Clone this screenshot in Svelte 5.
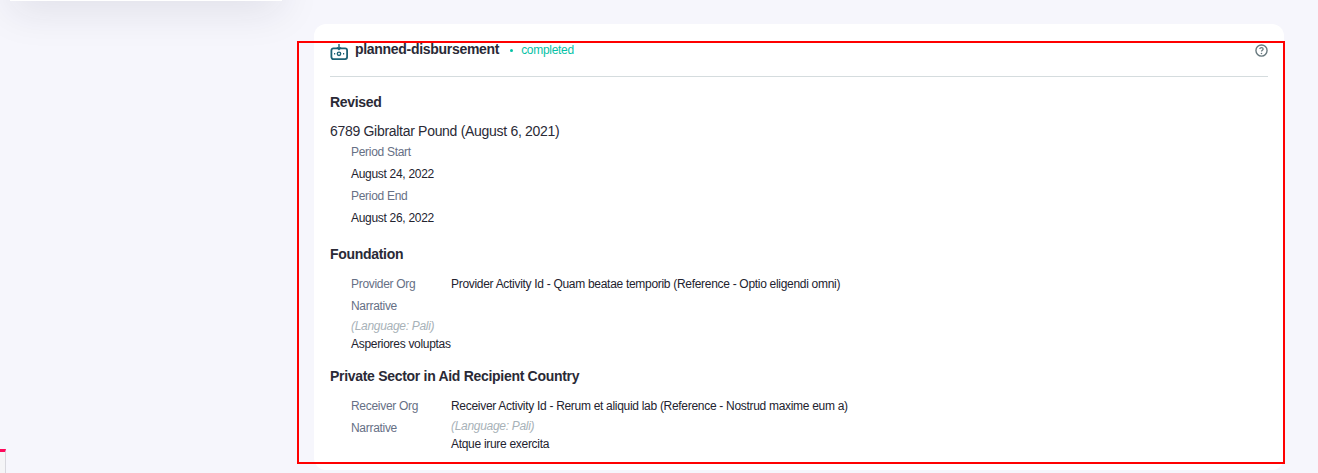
<script lang="ts">
  const providerRef = "Provider Activity Id - Quam beatae temporib (Reference - Optio eligendi omni)";
  const receiverRef = "Receiver Activity Id - Rerum et aliquid lab (Reference - Nostrud maxime eum a)";
</script>

<div class="page">
  <aside class="side">
    <div class="side-card"></div>
    <div class="side-mark"></div>
  </aside>

  <main class="card">
    <header class="head">
      <svg class="icon" viewBox="0 0 18 16" width="18" height="16" fill="none" stroke="#1d6275" aria-hidden="true">
        <rect x="1.4" y="4.4" width="15.7" height="10.7" rx="2" stroke-width="1.8" />
        <path d="M9 0V5.2M7 3.4L9 5.4l2-2" stroke-width="1.4" fill="none" />
        <circle cx="9" cy="9.8" r="1.7" stroke-width="1.4" />
        <path d="M4 9.8h1.2M13 9.8h1.2" stroke-width="1.4" />
      </svg>
      <h2>planned-disbursement</h2>
      <span class="dot"></span>
      <span class="status">completed</span>
      <svg class="help" viewBox="0 0 14 14" width="13" height="13" fill="none" aria-hidden="true">
        <circle cx="7" cy="7" r="6" stroke="#68797e" stroke-width="1.5" />
        <path d="M5.2 5.5c0-1 .8-1.6 1.8-1.6s1.8.6 1.8 1.5c0 1.3-1.8 1.3-1.8 2.6" stroke="#68797e" stroke-width="1.3" />
        <circle cx="7" cy="10.2" r=".85" fill="#68797e" />
      </svg>
    </header>

    <section class="revised">
      <h3>Revised</h3>
      <p class="amount">6789 Gibraltar Pound (August 6, 2021)</p>
      <div class="stack">
        <div class="label">Period Start</div>
        <div class="value">August 24, 2022</div>
        <div class="label">Period End</div>
        <div class="value">August 26, 2022</div>
      </div>
    </section>

    <section class="foundation">
      <h3>Foundation</h3>
      <div class="org">
        <div class="row">
          <div class="label key">Provider Org</div>
          <div class="value">{providerRef}</div>
        </div>
        <div class="label">Narrative</div>
        <div class="lang">(Language: Pali)</div>
        <div class="value tight">Asperiores voluptas</div>
      </div>
    </section>

    <section class="private">
      <h3>Private Sector in Aid Recipient Country</h3>
      <div class="org">
        <div class="row">
          <div class="label key">Receiver Org</div>
          <div class="value">{receiverRef}</div>
        </div>
        <div class="row">
          <div class="label key">Narrative</div>
          <div>
            <div class="lang">(Language: Pali)</div>
            <div class="value tight">Atque irure exercita</div>
          </div>
        </div>
      </div>
    </section>
  </main>

  <div class="highlight"></div>
</div>

<style>
  :global(body) {
    margin: 0;
    background: #f6f6fc;
  }

  .page {
    position: relative;
    display: flex;
    height: 473px;
    overflow: hidden;
    font-family: "Liberation Sans", Arial, sans-serif;
    letter-spacing: -0.3px;
    color: #1f2937;
    background: #f6f6fc;
  }

  .side {
    flex: 0 0 314px;
    display: flex;
    flex-direction: column;
    justify-content: space-between;
  }

  .side-card {
    width: 272px;
    height: 41px;
    margin: -40px 0 0 10px;
    background: #fff;
    box-shadow: 0 10px 40px rgba(30, 30, 60, 0.1);
  }

  .side-mark {
    width: 6px;
    height: 24px;
    box-sizing: border-box;
    border-top: 3px solid #ff0a5c;
    border-right: 1px solid #d8d8de;
    background: #f5f5f7;
  }

  .card {
    flex: 0 0 970px;
    box-sizing: border-box;
    height: 446px;
    margin-top: 24px;
    padding: 16px;
    background: #fff;
    border-radius: 12px;
  }

  .head {
    display: flex;
    align-items: center;
    height: 20px;
    padding-bottom: 16px;
    border-bottom: 1px solid #d5dcde;
  }

  .icon {
    margin-right: 7px;
    margin-top: 3px;
  }

  h2 {
    margin: -2px 0 0;
    font-size: 14px;
    line-height: 20px;
    font-weight: 700;
    color: #2a2a36;
  }

  .dot {
    width: 3px;
    height: 3px;
    margin: 0 8px 0 11px;
    border-radius: 50%;
    background: #06c2a6;
  }

  .status {
    font-size: 12px;
    color: #06c2a6;
  }

  .help {
    margin-left: auto;
  }

  h3 {
    margin: 0;
    font-size: 14px;
    line-height: 20px;
    font-weight: 700;
    color: #2a2a36;
  }

  .revised {
    margin-top: 15px;
  }

  .amount {
    margin: 9px 0 0;
    font-size: 14px;
    line-height: 20px;
    color: #2a2a36;
  }

  .stack {
    padding-left: 21px;
  }

  .foundation {
    margin-top: 15px;
  }

  .private {
    margin-top: 13px;
  }

  .org {
    padding-left: 21px;
    margin-top: 9px;
  }

  .row {
    display: flex;
  }

  .key {
    flex: 0 0 100px;
  }

  .label {
    font-size: 12px;
    line-height: 22px;
    color: #667085;
  }

  .value {
    font-size: 12px;
    line-height: 22px;
    color: #23232f;
  }

  .tight {
    line-height: 18px;
  }

  .lang {
    font-size: 12px;
    line-height: 18px;
    font-style: italic;
    color: #a8b2b8;
  }

  .highlight {
    position: absolute;
    left: 297px;
    top: 41px;
    width: 988px;
    height: 423px;
    box-sizing: border-box;
    border: 2px solid #f00;
    pointer-events: none;
  }
</style>
